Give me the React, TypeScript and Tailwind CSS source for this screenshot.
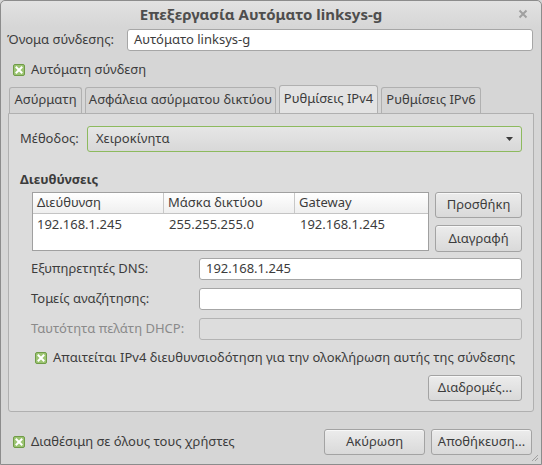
import React from "react";

const font = { fontFamily: '"Noto Sans", "DejaVu Sans", sans-serif' };

function Check() {
  return (
    <svg width="12" height="12" viewBox="0 0 12 12" className="shrink-0">
      <rect x="0.5" y="0.5" width="11" height="11" rx="1.5" fill="#9cc472" stroke="#6f9b47" />
      <path d="M3.5 3.5 L8.5 8.5 M8.5 3.5 L3.5 8.5" stroke="#ffffff" strokeWidth="2" strokeLinecap="square" />
    </svg>
  );
}

function Button({ children, className = "" }: { children: React.ReactNode; className?: string }) {
  return (
    <div
      className={
        "flex items-center justify-center rounded-[3px] border border-[#a3a3a3] bg-gradient-to-b from-[#ececec] to-[#d9d9d9] shadow-[inset_0_1px_0_#f8f8f8] text-[13px] text-[#3c3c3c] " +
        className
      }
    >
      {children}
    </div>
  );
}

function Field({ value = "", disabled = false, className = "" }: { value?: string; disabled?: boolean; className?: string }) {
  return (
    <div
      className={
        "flex items-center h-[22px] rounded-[3px] border px-[6px] text-[13px] text-[#3c3c3c] " +
        (disabled ? "bg-[#dddddd] border-[#b3b3b3] " : "bg-white border-[#a6a6a6] ") +
        className
      }
    >
      {value}
    </div>
  );
}

function Tab({ label, active = false, className = "" }: { label: string; active?: boolean; className?: string }) {
  return (
    <div
      className={
        "flex items-center justify-center rounded-t-[3px] border border-b-0 border-[#b0b0b0] text-[13px] text-[#3c3c3c] " +
        (active ? "h-[28px] bg-[#e3e3e3] " : "h-[26px] bg-[#d4d4d4] ") +
        className
      }
    >
      {label}
    </div>
  );
}

export default function App() {
  return (
    <div style={font} className="w-[542px] h-[465px] bg-[#d6d6d6] text-[#3c3c3c]">
      <div className="relative flex h-full w-full flex-col rounded-t-[5px] border border-[#8c8c8c] bg-[#d6d6d6]">
        {/* Title bar */}
        <div className="relative flex h-[26px] items-center justify-center rounded-t-[5px] bg-gradient-to-b from-[#e2e2e2] to-[#d6d6d6] pr-[20px]">
          <span className="text-[15px] font-bold text-[#4e4e4e]">Επεξεργασία Αυτόματο linksys-g</span>
          <svg width="10" height="10" viewBox="0 0 10 10" className="absolute right-[13px] top-[8px]">
            <path d="M1.5 1.5 L8.5 8.5 M8.5 1.5 L1.5 8.5" stroke="#a0a0a0" strokeWidth="2" />
          </svg>
        </div>

        {/* Name row */}
        <div className="mt-[2px] flex items-center pl-[6px] pr-[8px]">
          <span className="w-[120px] text-[13px]">Όνομα σύνδεσης:</span>
          <Field value="Αυτόματο linksys-g" className="flex-1" />
        </div>

        {/* Auto connect */}
        <div className="mt-[9px] flex items-center gap-[6px] pl-[12px] text-[13px]">
          <Check />
          <span>Αυτόματη σύνδεση</span>
        </div>

        {/* Tabs */}
        <div className="mt-[5px] flex h-[28px] items-end gap-[3px] pl-[8px]">
          <Tab label="Ασύρματη" className="w-[73px]" />
          <Tab label="Ασφάλεια ασύρματου δικτύου" className="w-[191px]" />
          <Tab label="Ρυθμίσεις IPv4" active className="w-[99px]" />
          <Tab label="Ρυθμίσεις IPv6" className="w-[100px]" />
        </div>

        {/* Panel */}
        <div className="mx-[7px] flex h-[299px] flex-col rounded-b-[3px] border border-[#b0b0b0] bg-[#dcdcdc] px-[11px] pt-[12px]">
          <div className="flex items-center">
            <span className="w-[67px] text-[13px]">Μέθοδος:</span>
            <div className="flex h-[26px] flex-1 items-center justify-between rounded-[3px] border border-[#8dba5e] bg-gradient-to-b from-[#e6e6e6] to-[#d8d8d8] pl-[8px] pr-[8px] text-[13px]">
              <span>Χειροκίνητα</span>
              <svg width="7" height="4" viewBox="0 0 7 4">
                <path d="M0 0 H7 L3.5 4 Z" fill="#3c3c3c" />
              </svg>
            </div>
          </div>

          <div className="mt-[18px] text-[13px] font-bold">Διευθύνσεις</div>

          <div className="mt-[3px] flex gap-[6px] pl-[12px]">
            <div className="flex h-[59px] w-[397px] flex-col border border-[#a0a0a0] bg-white text-[13px]">
              <div className="flex h-[21px] border-b border-[#c4c4c4] bg-gradient-to-b from-[#ffffff] to-[#efefef]">
                <div className="flex w-[131px] items-center border-r border-[#c8c8c8] pl-[4px]">Διεύθυνση</div>
                <div className="flex w-[131px] items-center border-r border-[#c8c8c8] pl-[4px]">Μάσκα δικτύου</div>
                <div className="flex flex-1 items-center pl-[4px]">Gateway</div>
              </div>
              <div className="flex h-[21px] items-center">
                <div className="w-[131px] pl-[4px]">192.168.1.245</div>
                <div className="w-[131px] pl-[5px]">255.255.255.0</div>
                <div className="flex-1 pl-[5px]">192.168.1.245</div>
              </div>
            </div>
            <div className="flex flex-1 flex-col gap-[7px]">
              <Button className="h-[26px]">Προσθήκη</Button>
              <Button className="h-[27px]">Διαγραφή</Button>
            </div>
          </div>

          <div className="mt-[6px] flex flex-col gap-[8px] pl-[11px]">
            <div className="flex items-center">
              <span className="w-[168px] text-[13px]">Εξυπηρετητές DNS:</span>
              <Field value="192.168.1.245" className="flex-1" />
            </div>
            <div className="flex items-center">
              <span className="w-[168px] text-[13px]">Τομείς αναζήτησης:</span>
              <Field className="flex-1" />
            </div>
            <div className="flex items-center">
              <span className="w-[168px] text-[13px] text-[#8a8a8a]">Ταυτότητα πελάτη DHCP:</span>
              <Field disabled className="flex-1" />
            </div>
          </div>

          <div className="mt-[8px] flex items-center gap-[6px] pl-[15px] text-[13px]">
            <Check />
            <span>Απαιτείται IPv4 διευθυνσιοδότηση για την ολοκλήρωση αυτής της σύνδεσης</span>
          </div>

          <div className="mt-[7px] flex justify-end">
            <Button className="h-[26px] w-[94px]">Διαδρομές...</Button>
          </div>
        </div>

        {/* Bottom row */}
        <div className="mt-[17px] flex items-center pl-[12px] pr-[9px]">
          <div className="flex flex-1 items-center gap-[6px] text-[13px]">
            <Check />
            <span>Διαθέσιμη σε όλους τους χρήστες</span>
          </div>
          <Button className="h-[26px] w-[101px]">Ακύρωση</Button>
          <Button className="ml-[6px] h-[26px] w-[101px]">Αποθήκευση...</Button>
        </div>

        <svg width="8" height="8" viewBox="0 0 8 8" className="absolute bottom-[2px] right-[2px]">
          <path d="M7 1 L1 7 M7 4 L4 7" stroke="#a0a0a0" strokeWidth="1" />
        </svg>
      </div>
    </div>
  );
}
